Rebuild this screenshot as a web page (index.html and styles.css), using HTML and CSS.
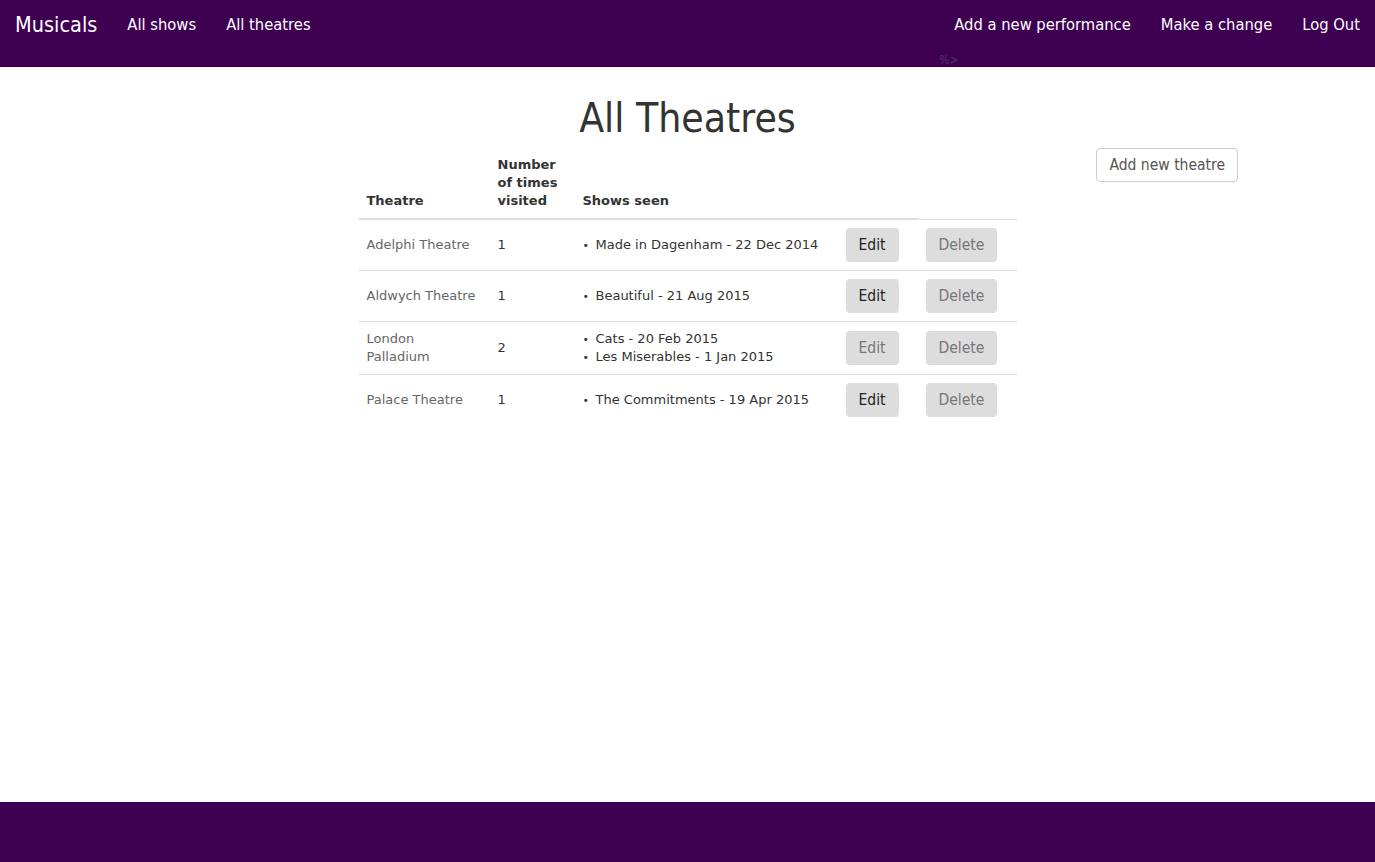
FILE: index.html
```html
<!DOCTYPE html>
<html lang="en">
<head>
<meta charset="utf-8">
<title>All Theatres</title>
<link rel="stylesheet" href="styles.css">
</head>
<body>
<header class="navbar">
  <div class="nav-left">
    <a class="brand" href="#">Musicals</a>
    <a class="nav-link" href="#">All shows</a>
    <a class="nav-link" href="#">All theatres</a>
  </div>
  <div class="nav-right">
    <div class="nav-links">
      <a class="nav-link" href="#">Add a new performance</a>
      <a class="nav-link" href="#">Make a change</a>
      <a class="nav-link" href="#">Log Out</a>
    </div>
    <div class="stray">%&gt;</div>
  </div>
</header>
<main class="main">
  <h1 class="title">All Theatres</h1>
  <div class="content">
    <table class="theatres">
      <colgroup>
        <col class="c-name"><col class="c-num"><col class="c-shows"><col class="c-edit"><col class="c-del">
      </colgroup>
      <thead>
        <tr>
          <th>Theatre</th>
          <th>Number of times visited</th>
          <th>Shows seen</th>
          <th></th>
        </tr>
      </thead>
      <tbody>
        <tr>
          <td class="name">Adelphi Theatre</td>
          <td>1</td>
          <td><ul class="shows"><li>Made in Dagenham - 22 Dec 2014</li></ul></td>
          <td><button class="btn">Edit</button></td>
          <td><button class="btn btn-muted">Delete</button></td>
        </tr>
        <tr>
          <td class="name">Aldwych Theatre</td>
          <td>1</td>
          <td><ul class="shows"><li>Beautiful - 21 Aug 2015</li></ul></td>
          <td><button class="btn">Edit</button></td>
          <td><button class="btn btn-muted">Delete</button></td>
        </tr>
        <tr>
          <td class="name">London Palladium</td>
          <td>2</td>
          <td><ul class="shows"><li>Cats - 20 Feb 2015</li><li>Les Miserables - 1 Jan 2015</li></ul></td>
          <td><button class="btn btn-muted">Edit</button></td>
          <td><button class="btn btn-muted">Delete</button></td>
        </tr>
        <tr>
          <td class="name">Palace Theatre</td>
          <td>1</td>
          <td><ul class="shows"><li>The Commitments - 19 Apr 2015</li></ul></td>
          <td><button class="btn">Edit</button></td>
          <td><button class="btn btn-muted">Delete</button></td>
        </tr>
      </tbody>
    </table>
    <div class="actions">
      <button class="btn-outline">Add new theatre</button>
    </div>
  </div>
</main>
<footer class="footer"></footer>
</body>
</html>
```
FILE: styles.css
```css
* { box-sizing: border-box; }
html, body { margin: 0; padding: 0; }
body {
  font-family: "DejaVu Sans Condensed", "DejaVu Sans", sans-serif;
  color: #333;
  background: #fff;
  min-height: 100vh;
  display: flex;
  flex-direction: column;
}
.navbar {
  background: #3e0051;
  height: 67px;
  display: flex;
  justify-content: space-between;
  align-items: flex-start;
}
.nav-left { display: flex; align-items: flex-start; }
.brand {
  color: #fff;
  text-decoration: none;
  font-size: 21.5px;
  line-height: 20px;
  padding: 15px;
}
.nav-link {
  color: #fff;
  text-decoration: none;
  font-size: 16.4px;
  line-height: 20px;
  padding: 15px;
}
.nav-right { display: flex; flex-direction: column; }
.nav-links { display: flex; }
.stray {
  font-size: 12px;
  line-height: 17px;
  padding-top: 2px;
  color: #553266;
}
.main { flex: 1; }
.title {
  font-size: 40.5px;
  font-weight: normal;
  line-height: 46px;
  text-align: center;
  margin: 28px 0 7px;
  color: #333;
}
.content {
  display: grid;
  grid-template-columns: 1fr 658px 1fr;
  align-items: start;
}
.theatres {
  grid-column: 2;
  width: 658px;
  table-layout: fixed;
  border-collapse: collapse;
  font-family: "DejaVu Sans", sans-serif;
  font-size: 13px;
  line-height: 18px;
}
.c-name { width: 131px; }
.c-num { width: 85px; }
.c-shows { width: 263px; }
.c-edit { width: 80px; }
.c-del { width: 99px; }
.theatres th {
  text-align: left;
  vertical-align: bottom;
  padding: 8px;
  font-weight: bold;
  color: #333;
  border-bottom: 2px solid #ddd;
}
.theatres td {
  padding: 8px;
  vertical-align: middle;
  border-top: 1px solid #ddd;
  color: #333;
}
.theatres td.name { color: #666; padding-right: 11px; }
.shows { list-style: none; margin: 0; padding: 0; }
.shows li { line-height: 18px; }
.shows li::before {
  content: "•";
  display: inline-block;
  width: 13px;
  font-size: 11px;
  line-height: 0;
}
.btn {
  font-family: "DejaVu Sans Condensed", "DejaVu Sans", sans-serif;
  font-size: 15.5px;
  line-height: 20px;
  padding: 6px 12px;
  border: 1px solid transparent;
  border-radius: 4px;
  background: #ddd;
  color: #222;
  height: 34px;
}
.btn-muted { color: #777; }
.actions {
  grid-column: 3;
  justify-self: end;
  margin-right: 137px;
}
.btn-outline {
  font-family: "DejaVu Sans Condensed", "DejaVu Sans", sans-serif;
  font-size: 15.5px;
  line-height: 20px;
  padding: 6px 12px;
  border: 1px solid #ccc;
  border-radius: 4px;
  background: #fff;
  color: #555;
  height: 34px;
}
.footer {
  height: 60px;
  background: #3e0051;
}
```
